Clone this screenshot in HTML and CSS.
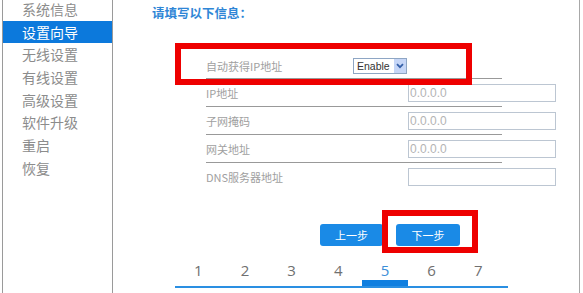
FILE: index.html
```html
<!DOCTYPE html>
<html lang="zh-CN">
	<head>
		<meta charset="utf-8">
		<title>设置向导</title>
		<link rel="stylesheet" href="styles.css">
	</head>
	<body>
		<!-- Menu -->
		<div class="sidebar">
			<ul class="menu">
				<li>系统信息</li>
				<li class="selected">设置向导</li>
				<li>无线设置</li>
				<li>有线设置</li>
				<li>高级设置</li>
				<li>软件升级</li>
				<li>重启</li>
				<li>恢复</li>
			</ul>
		</div>

		<!-- Wizard -->
		<div class="main">
			<h1 class="title">请填写以下信息：</h1>

			<div class="form">
				<div class="row">
					<span class="label first">自动获得IP地址</span>
					<div class="select">
						<span class="selText">Enable</span>
						<span class="selArrow">
							<svg width="8" height="6" viewBox="0 0 8 6"><path d="M1 1.2 L4 4.2 L7 1.2" fill="none" stroke="#3560a8" stroke-width="1.8"/></svg>
						</span>
					</div>
				</div>
				<div class="row">
					<span class="label">IP地址</span>
					<input class="ipBox" type="text" value="0.0.0.0">
				</div>
				<div class="row">
					<span class="label">子网掩码</span>
					<input class="ipBox" type="text" value="0.0.0.0">
				</div>
				<div class="row">
					<span class="label">网关地址</span>
					<input class="ipBox" type="text" value="0.0.0.0">
				</div>
				<div class="row last">
					<span class="label">DNS服务器地址</span>
					<input class="ipBox" type="text" value="">
				</div>
			</div>

			<div class="buttons">
				<button class="btn" type="button">上一步</button>
				<button class="btn" type="button">下一步</button>
			</div>

			<ul class="steps">
				<li>1</li>
				<li>2</li>
				<li>3</li>
				<li>4</li>
				<li class="current">5</li>
				<li>6</li>
				<li>7</li>
			</ul>

			<!-- red marks -->
			<div class="mark markSelect"></div>
			<div class="mark markNext"></div>
		</div>
	</body>
</html>
```

FILE: styles.css
```css
html, body {
	margin: 0;
	padding: 0;
	height: 293px;
	overflow: hidden;
	background: #fff;
}

body {
	display: flex;
	font-family: "Noto Sans CJK SC", "Liberation Sans", sans-serif;
}

.sidebar {
	margin-left: 2px;
	width: 109px;
	border-left: 1px solid #9a9a9a;
	border-right: 1px solid #9a9a9a;
}

.menu {
	list-style: none;
	margin: -2px 0 0 0;
	padding: 0;
}

.menu li {
	height: 22.67px;
	line-height: 22.67px;
	padding-left: 19px;
	font-size: 14px;
	color: #8c8c8c;
}

.menu li.selected {
	background-color: #0c79dc;
	color: #fff;
}

.main {
	position: relative;
	width: 466px;
	border-right: 1px solid #a8a8a8;
}

.title {
	margin: 0;
	padding: 5px 0 0 39px;
	font-size: 12.5px;
	line-height: 16px;
	font-weight: bold;
	color: #2f86d6;
}

.form {
	margin: 30px 0 0 93px;
}

.row {
	display: flex;
	align-items: center;
	height: 27px;
	padding-bottom: 1px;
	background: linear-gradient(#999, #999) no-repeat left bottom / 296px 1px;
}

.row.last {
	background: none;
}

.label {
	width: 202px;
	font-size: 11px;
	color: #a0a0a0;
}

.label.first {
	width: 147px;
	padding-top: 2px;
}

.ipBox {
	box-sizing: border-box;
	width: 148px;
	height: 18px;
	margin: 1px 0 0 0;
	padding: 0 1px;
	border: 1px solid #bcc6d2;
	font-family: "Liberation Sans", sans-serif;
	font-size: 12px;
	color: #b4b4b4;
	outline: none;
}

.select {
	display: flex;
	align-items: center;
	box-sizing: border-box;
	width: 54px;
	height: 16px;
	margin-top: 2px;
	border: 1px solid #8ea6c4;
	background: #fff;
}

.selText {
	flex: 1;
	padding-left: 3px;
	font-family: "Liberation Sans", sans-serif;
	font-size: 10.5px;
	color: #333;
}

.selArrow {
	display: flex;
	align-items: center;
	justify-content: center;
	width: 12px;
	height: 14px;
	background: #c6d6f7;
}

.buttons {
	display: flex;
	gap: 13px;
	margin: 33px 0 0 207px;
}

.btn {
	width: 63px;
	height: 22px;
	padding: 0;
	border: none;
	border-radius: 3px;
	background-color: #1a8ae6;
	color: #fff;
	font-family: "Noto Sans CJK SC", sans-serif;
	font-size: 11px;
}

.btn + .btn {
	width: 64px;
}

.steps {
	display: flex;
	list-style: none;
	width: 333px;
	margin: 14px 0 0 62px;
	padding: 0;
	border-bottom: 2px solid #2a8fe2;
}

.steps li {
	flex: 0 0 46.67px;
	height: 20px;
	line-height: 20px;
	border-bottom: 6px solid transparent;
	text-align: center;
	font-family: "Open Sans", sans-serif;
	font-size: 15px;
	color: #707070;
}

.steps li.current {
	color: #3b8ed8;
	border-bottom-color: #0f7fe0;
}

.mark {
	position: absolute;
	border: 6px solid #ee0000;
}

.markSelect {
	left: 62px;
	top: 43px;
	width: 285px;
	height: 30px;
}

.markNext {
	left: 269px;
	top: 210px;
	width: 84px;
	height: 31px;
}
```
